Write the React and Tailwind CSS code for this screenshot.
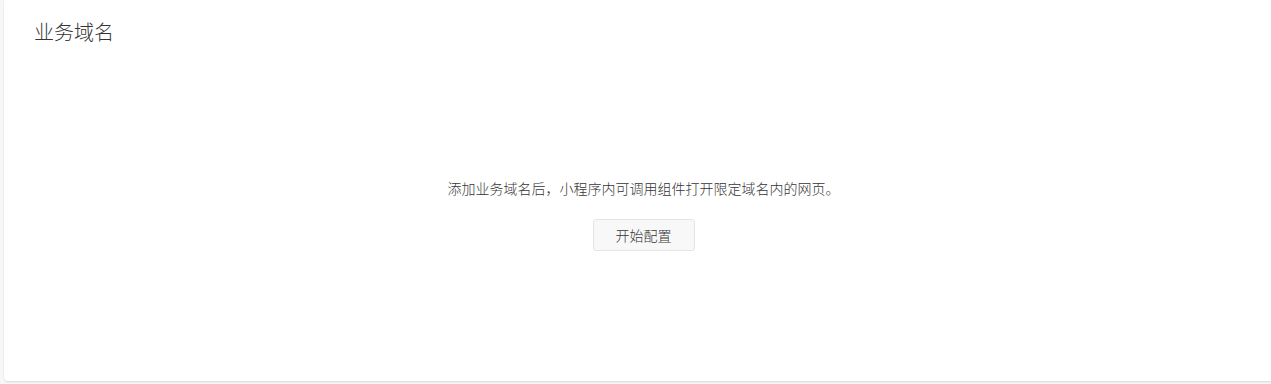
export default function App() {
  return (
    <div
      className="h-[384px] w-[1271px] overflow-hidden bg-[#f6f7f9]"
      style={{ fontFamily: '"Noto Sans CJK SC", "Liberation Sans", sans-serif' }}
    >
      <div className="ml-[4px] h-[381px] w-[1279px] rounded-b-[4px] bg-white shadow-[0_1px_2px_rgba(0,0,0,0.12)]">
        <h2 className="pl-[30px] pt-[18px] text-[20px] leading-[28px] font-light text-[#353535]">
          业务域名
        </h2>
        <div className="mt-[132px] flex flex-col items-center">
          <p className="text-[14px] leading-[20px] font-light text-[#353535]">
            添加业务域名后，小程序内可调用组件打开限定域名内的网页。
          </p>
          <button className="mt-[21px] h-[32px] w-[102px] rounded-[3px] border border-[#e4e4e4] bg-[#f8f8f8] text-[14px] font-light text-[#353535]">
            开始配置
          </button>
        </div>
      </div>
    </div>
  );
}
